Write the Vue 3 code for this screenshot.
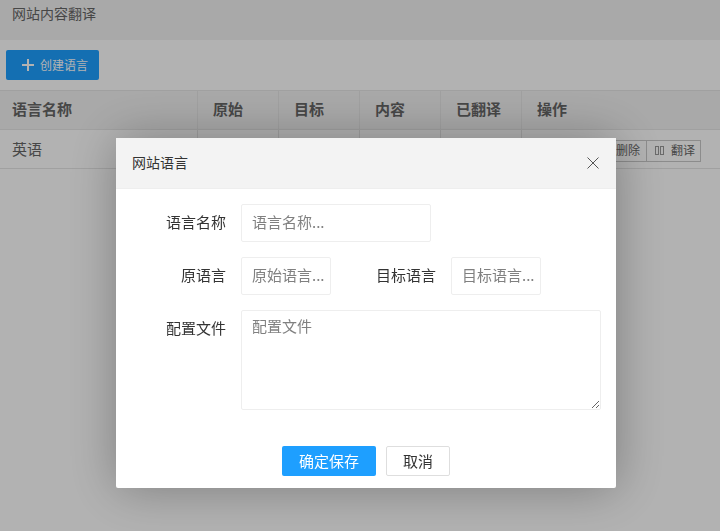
<template>
  <div class="Page">
    <div class="Head">网站内容翻译</div>
    <div class="Toolbar">
      <button class="Create">
        <svg class="plus" width="14" height="14" viewBox="0 0 14 14">
          <path d="M7 1v12M1 7h12" stroke="#fff" stroke-width="2" fill="none" />
        </svg>
        <span>创建语言</span>
      </button>
    </div>
    <div class="Table">
      <div class="Row HeadRow">
        <div v-for="col in columns" class="Cell" :class="col.cls">{{ col.name }}</div>
      </div>
      <div class="Row">
        <div class="Cell name">英语</div>
        <div class="Cell src"></div>
        <div class="Cell dst"></div>
        <div class="Cell txt"></div>
        <div class="Cell done"></div>
        <div class="Cell ops">
          <div class="OpGroup">
            <span class="Op">删除</span>
            <span class="Op"><i class="tofu"></i><i class="tofu"></i>翻译</span>
          </div>
        </div>
      </div>
    </div>
  </div>

  <div class="Shade"></div>

  <div class="Dialog">
    <div class="Title">
      <span>网站语言</span>
      <svg class="close" width="12" height="12" viewBox="0 0 12 12">
        <path d="M.5.5l11 11M11.5.5l-11 11" stroke="#555" stroke-width="1" fill="none" />
      </svg>
    </div>
    <div class="Form">
      <div class="FormRow">
        <label>语言名称</label>
        <input class="wide" type="text" placeholder="语言名称..." />
      </div>
      <div class="FormRow">
        <label>原语言</label>
        <input class="short" type="text" placeholder="原始语言..." />
        <label class="second">目标语言</label>
        <input class="short" type="text" placeholder="目标语言..." />
      </div>
      <div class="FormRow">
        <label>配置文件</label>
        <textarea placeholder="配置文件"></textarea>
      </div>
    </div>
    <div class="Actions">
      <button class="Save">确定保存</button>
      <button class="Cancel">取消</button>
    </div>
  </div>
</template>

<script setup>
const columns = [
  { name: '语言名称', cls: 'name' },
  { name: '原始', cls: 'src' },
  { name: '目标', cls: 'dst' },
  { name: '内容', cls: 'txt' },
  { name: '已翻译', cls: 'done' },
  { name: '操作', cls: 'ops' }
]
</script>

<style>
body {
  background: #fff;
  overflow: hidden;
}
</style>

<style scoped>
.Page {
  width: 720px;
  height: 531px;
  background: #fff;
  color: #666;
  font-family: "Noto Sans CJK SC", "Liberation Sans", sans-serif;
  font-size: 15px;
}

.Head {
  height: 40px;
  padding: 3px 12px 0;
  box-sizing: border-box;
  background: #f2f2f2;
  font-size: 14px;
  line-height: 20px;
}

.Toolbar {
  height: 50px;
  box-sizing: border-box;
  padding: 10px 6px;
}

.Create {
  display: flex;
  align-items: center;
  gap: 5px;
  width: 93px;
  height: 30px;
  padding: 0 0 2px 15px;
  border: 0;
  border-radius: 2px;
  background: #1e9fff;
  color: #fff;
  font-family: inherit;
  font-size: 12px;
}

.plus {
  margin-top: 2px;
}

.Table {
  border-top: 1px solid #e6e6e6;
}

.Row {
  display: flex;
  height: 38px;
  border-bottom: 1px solid #e6e6e6;
}

.Cell {
  box-sizing: border-box;
  padding: 0 15px;
  line-height: 38px;
  border-right: 1px solid #e6e6e6;
  flex: none;
}

.HeadRow .Cell {
  line-height: 36px;
  font-weight: 700;
  color: #666;
  background: #f2f2f2;
}

.Cell.name {
  width: 198px;
  padding: 0 12px;
}

.Cell.src,
.Cell.dst,
.Cell.txt,
.Cell.done {
  width: 81px;
}

.Cell.ops {
  flex: 1;
  border-right: 0;
  position: relative;
}

.OpGroup {
  position: absolute;
  right: 19px;
  top: 10px;
  display: flex;
  border: 1px solid #c9c9c9;
  height: 22px;
  box-sizing: border-box;
  line-height: 18px;
  font-size: 12px;
}

.Op {
  display: flex;
  align-items: center;
  padding: 0 6px 2px;
}

.Op + .Op {
  border-left: 1px solid #c9c9c9;
  padding-left: 8px;
  padding-right: 5px;
}

.tofu {
  width: 2px;
  height: 7px;
  border: 1px solid #999;
  margin-right: 1px;
}

.tofu + .tofu {
  margin-right: 7px;
}

.Shade {
  position: fixed;
  inset: 0;
  background: rgba(0, 0, 0, 0.3);
}

.Dialog {
  position: fixed;
  left: 116px;
  top: 138px;
  width: 500px;
  height: 350px;
  background: #fff;
  border-radius: 2px;
  box-shadow: 1px 1px 50px rgba(0, 0, 0, 0.3);
  font-family: "Noto Sans CJK SC", "Liberation Sans", sans-serif;
  font-size: 15px;
  color: #333;
}

.Title {
  display: flex;
  align-items: center;
  justify-content: space-between;
  height: 51px;
  box-sizing: border-box;
  padding: 0 17px 0 16px;
  background: #f3f3f3;
  border-bottom: 1px solid #eee;
  font-size: 14px;
}

.Title span {
  margin-top: -3px;
}

.Form {
  display: flex;
  flex-direction: column;
  gap: 15px;
  padding-top: 15px;
}

.FormRow {
  display: flex;
}

label {
  width: 110px;
  line-height: 35px;
  text-align: right;
  flex: none;
}

.FormRow input,
.FormRow textarea {
  margin-left: 15px;
  box-sizing: border-box;
  border: 1px solid #eee;
  border-radius: 2px;
  padding: 0 10px 3px;
  background: #fff;
  color: #333;
  font-family: inherit;
  font-size: 15px;
  outline: none;
}

.FormRow input::placeholder,
.FormRow textarea::placeholder {
  color: #808080;
}

input.wide {
  width: 190px;
  height: 38px;
}

.FormRow input.short {
  width: 90px;
  height: 38px;
  padding-right: 2px;
}

label.second {
  width: 105px;
}

textarea {
  width: 360px;
  height: 100px;
  padding: 5px 10px !important;
  line-height: 20px;
}

.Actions {
  display: flex;
  justify-content: center;
  gap: 10px;
  margin-top: 36px;
}

.Actions button {
  height: 30px;
  border-radius: 2px;
  font-family: inherit;
  font-size: 15px;
  padding: 0 0 2px;
}

.Save {
  width: 94px;
  border: 0;
  background: #1e9fff;
  color: #fff;
}

.Cancel {
  width: 64px;
  border: 1px solid #dedede;
  background: #fff;
  color: #333;
}
</style>
